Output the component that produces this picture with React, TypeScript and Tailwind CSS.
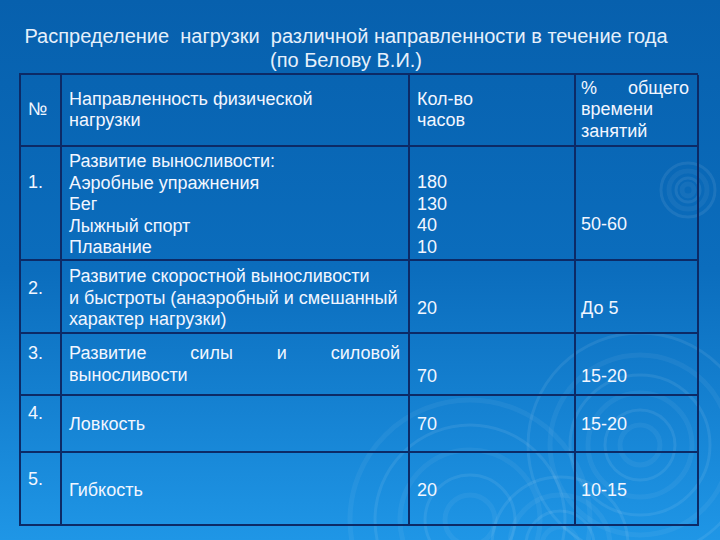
import React from "react";

type Cell = { lines: string[]; pt: number; justify?: boolean; center?: boolean };

const cols = ["w-[41px]", "w-[348px]", "w-[166px]", "w-[123px]"];

const rows: { h: string; cells: Cell[] }[] = [
  {
    h: "h-[72px]",
    cells: [
      { lines: ["№"], pt: 0, center: true },
      { lines: ["Направленность физической", "нагрузки"], pt: 0, center: true },
      { lines: ["Кол-во", "часов"], pt: 0, center: true },
      { lines: ["% общего", "времени", "занятий"], pt: 0, center: true, justify: true },
    ],
  },
  {
    h: "h-[114px]",
    cells: [
      { lines: ["1."], pt: 25 },
      { lines: ["Развитие выносливости:", "Аэробные упражнения", "Бег", "Лыжный спорт", "Плавание"], pt: 4 },
      { lines: ["180", "130", "40", "10"], pt: 25 },
      { lines: ["50-60"], pt: 67 },
    ],
  },
  {
    h: "h-[73px]",
    cells: [
      { lines: ["2."], pt: 17 },
      { lines: ["Развитие скоростной выносливости", "и быстроты (анаэробный и смешанный", "характер нагрузки)"], pt: 5 },
      { lines: ["20"], pt: 37 },
      { lines: ["До 5"], pt: 37 },
    ],
  },
  {
    h: "h-[62px]",
    cells: [
      { lines: ["3."], pt: 9 },
      { lines: ["Развитие силы и силовой", "выносливости"], pt: 9, justify: true },
      { lines: ["70"], pt: 32 },
      { lines: ["15-20"], pt: 32 },
    ],
  },
  {
    h: "h-[57px]",
    cells: [
      { lines: ["4."], pt: 7 },
      { lines: ["Ловкость"], pt: 18 },
      { lines: ["70"], pt: 18 },
      { lines: ["15-20"], pt: 18 },
    ],
  },
  {
    h: "h-[73px]",
    cells: [
      { lines: ["5."], pt: 16 },
      { lines: ["Гибкость"], pt: 27 },
      { lines: ["20"], pt: 27 },
      { lines: ["10-15"], pt: 27 },
    ],
  },
];

const ptClass: Record<number, string> = {
  0: "pt-0",
  4: "pt-[4px]",
  5: "pt-[5px]",
  7: "pt-[7px]",
  9: "pt-[9px]",
  16: "pt-[16px]",
  17: "pt-[17px]",
  18: "pt-[18px]",
  25: "pt-[25px]",
  27: "pt-[27px]",
  32: "pt-[32px]",
  37: "pt-[37px]",
  67: "pt-[67px]",
};

function Ripples() {
  const sets = [
    { cx: 640, cy: 445, rs: [20, 35, 52, 70, 90, 112] },
    { cx: 560, cy: 545, rs: [18, 34, 50, 68] },
    { cx: 470, cy: 520, rs: [25, 45, 70, 95, 120] },
    { cx: 688, cy: 190, rs: [6, 12, 19, 27] },
  ];
  return (
    <svg className="absolute inset-0 pointer-events-none" width="720" height="540" viewBox="0 0 720 540">
      {sets.map((s, i) =>
        s.rs.map((r, j) => (
          <circle
            key={`${i}-${j}`}
            cx={s.cx}
            cy={s.cy}
            r={r}
            fill="none"
            stroke="#ffffff"
            strokeOpacity={0.05 + (j % 2) * 0.03}
            strokeWidth={j % 2 ? 3 : 5}
          />
        ))
      )}
    </svg>
  );
}

export default function App() {
  return (
    <div
      className="relative w-[720px] h-[540px] overflow-hidden bg-gradient-to-b from-[#0760ad] via-[#0b6dbd] to-[#1f96e6] text-[#f2f6ff]"
      style={{ fontFamily: '"Liberation Sans", Arial, sans-serif' }}
    >
      <Ripples />
      <div className="relative flex flex-col">
        <div className="pt-[24px] pr-[28px] text-center text-[20px] leading-[24px] text-[#e6f0fb]">
          <div>Распределение&nbsp; нагрузки&nbsp; различной направленности в течение года</div>
          <div>(по Белову В.И.)</div>
        </div>
        <div className="ml-[19px] mt-[1px] w-[679px] border-l-2 border-t-2 border-[#0c2a66]">
          {rows.map((row, ri) => (
            <div key={ri} className={`flex ${row.h}`}>
              {row.cells.map((c, ci) => (
                <div
                  key={ci}
                  className={`${cols[ci]} shrink-0 border-r-2 border-b-2 border-[#0c2a66] ${
                    ci === 0 ? "pl-[7px]" : ci === 3 ? "pl-[5px] pr-[8px]" : "pl-[7px] pr-[8px]"
                  } ${c.center ? "flex flex-col justify-center" : ptClass[c.pt]} text-[18px] leading-[21.5px]`}
                >
                  {c.lines.map((l, li) => (
                    <div
                      key={li}
                      className={
                        c.justify && li === 0
                          ? "text-justify [text-align-last:justify]"
                          : "whitespace-nowrap"
                      }
                    >
                      {l}
                    </div>
                  ))}
                </div>
              ))}
            </div>
          ))}
        </div>
      </div>
    </div>
  );
}
